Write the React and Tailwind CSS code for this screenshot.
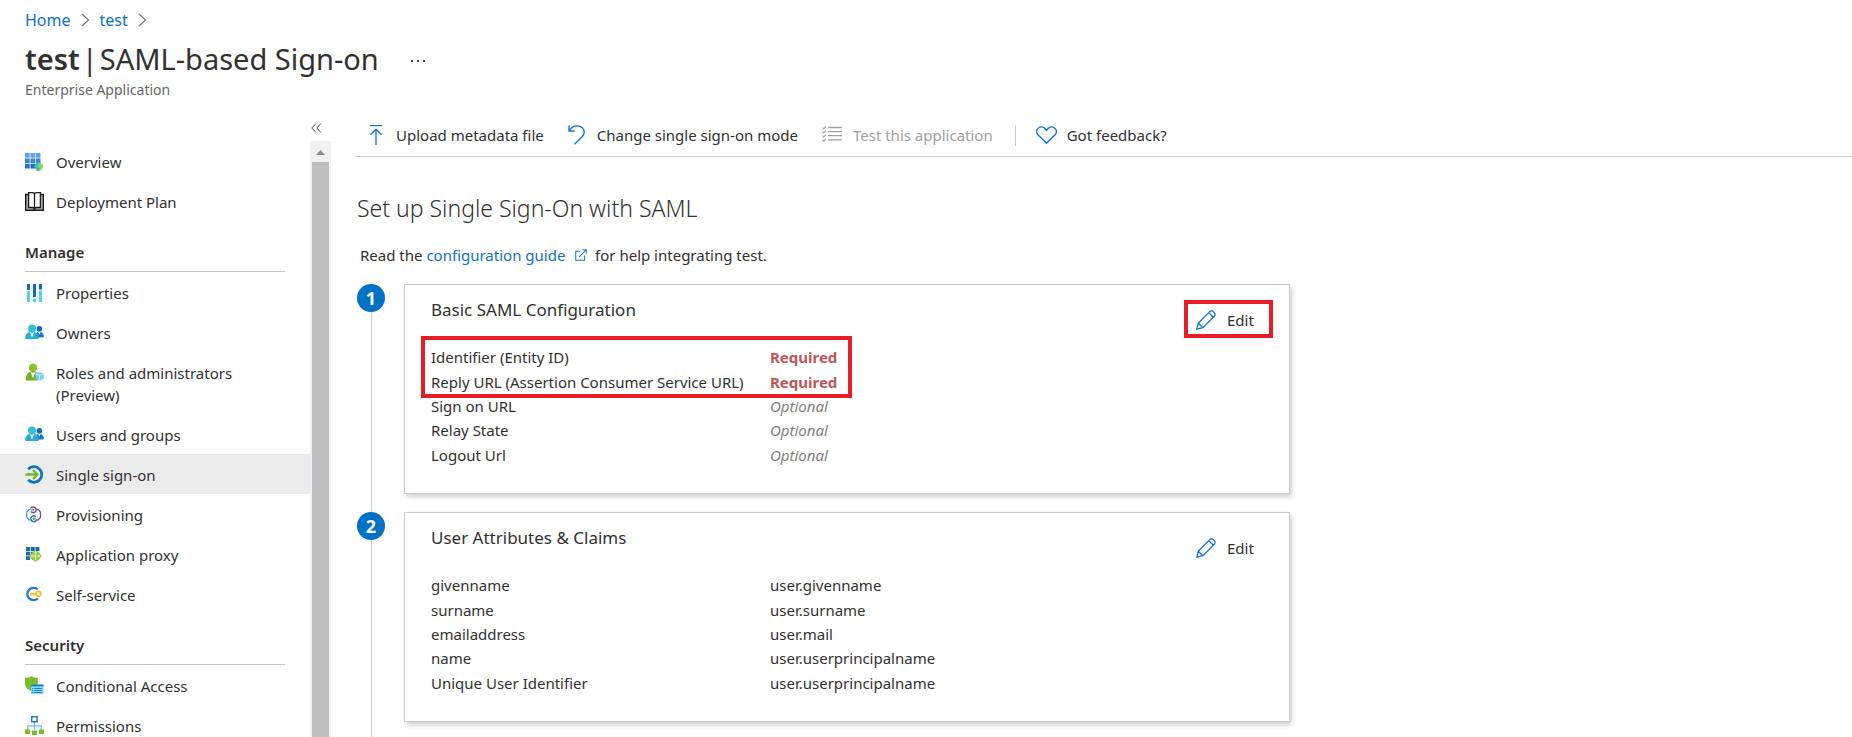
import React, { useState } from 'react';
import clsx from 'clsx';

const Icon = ({ size = 18, box = '0 0 18 18', children }) => (
  <svg width={size} height={size} viewBox={box} fill="none" aria-hidden="true" className="shrink-0">{children}</svg>
);

const OverviewIcon = () => (
  <Icon>
    {[0, 5.4, 10.8].map((y, r) => [0, 5.4, 10.8].map(x => (
      <rect key={`${x}-${y}`} x={x} y={y} width="4.7" height="4.7" fill={['#5ea0ef', '#3f86da', '#2a6fc4'][r]} />
    )))}
    <circle cx="13.8" cy="13.6" r="4.2" fill="#86e04a" />
    <path d="M13.8 9.4a4.2 4.2 0 0 0-3.6 6.3l3.400-2z" fill="#32bedd" />
    <path d="M10.400 16a4.2 4.2 0 0 0 5 1.5l-1.600-3.200z" fill="#32bedd" />
  </Icon>
);

const BookIcon = () => (
  <Icon size={19} box="0 0 19 19">
    <path d="M.7 2.500h17.600v15.800H.7z" fill="#b5b5b5" stroke="#1b1b1b" strokeWidth="1.400" />
    <path d="M3.600.7h3.900c1.200 0 2 .6 2 1.800 0-1.200.8-1.800 2-1.800h3.900V15.500h-3.900c-1 0-2 .7-2 2.500 0-1.800-1-2.500-2-2.500H3.600z" fill="#fff" stroke="#1b1b1b" strokeWidth="1.300" />
    <path d="M9.500 2v16" stroke="#1b1b1b" strokeWidth="1.300" />
  </Icon>
);

const PropertiesIcon = () => (
  <Icon>
    <path d="M3.500 0v6M9.500 0v13M15.500 0v5.500" stroke="#0f6cbd" strokeWidth="3" />
    <path d="M3.500 7v11M9.500 14.500V18M15.500 6.500V18" stroke="#50d5f5" strokeWidth="3" />
  </Icon>
);

const UsersIcon = () => (
  <Icon size={19} box="0 0 19 18">
    <circle cx="14.400" cy="5.300" r="2.800" fill="#0f6cbd" />
    <path d="M10.500 14h7.300c.8 0 1.200-.5 1.100-1.200-.4-2.800-2-4.500-4.500-4.500s-3.900 1.700-3.900 5.700z" fill="#1a78cc" />
    <path d="M14.400 11l-1.200-2.600h2.400z" fill="#fff" />
    <circle cx="7" cy="5" r="4" fill="#32bedd" />
    <path d="M1.200 15.500h11.400c.9 0 1.400-.6 1.300-1.500C13.400 10.500 11 8 7 8S.6 10.500.1 14c-.1.900.3 1.500 1.100 1.500z" fill="#27aed0" />
    <path d="M7 14L4.800 8.600Q7 10 9.200 8.600z" fill="#fff" />
  </Icon>
);

const RolesIcon = () => (
  <Icon size={19} box="0 0 19 18">
    <circle cx="8" cy="4.200" r="4.200" fill="#86c32c" />
    <path d="M2 17h10.500l2-3C14 10 12 7.800 8 7.800S1.200 10.500.6 15c-.1 1.200.4 2 1.400 2z" fill="#76ab26" />
    <path d="M8 14.500L5.500 8.400Q8 10 10.500 8.400z" fill="#fff" />
    <path d="M14.500 8.700l4.300 1.600v4.900l-4.300 2-4-2v-4.900z" fill="#6bd3ee" />
    <path d="M10.500 10.300l4 1.600 4.300-1.600M14.500 12v5" stroke="#c5effa" strokeWidth="1" />
  </Icon>
);

const SignOnIcon = () => (
  <Icon size={19} box="0 0 19 19">
    <path d="M3.200 4.300A7.800 7.800 0 1 1 3.200 14.700" stroke="#1172bd" strokeWidth="2.800" />
    <path d="M.5 9.500H12M8 5l4.500 4.500L8 14" stroke="#76b82a" strokeWidth="2.300" />
  </Icon>
);

const ProvisioningIcon = () => (
  <Icon>
    <path d="M5.500 3.500H4L1.800 6v5.500L4 14h1.500" stroke="#3c8fc4" strokeWidth="1.200" />
    <path d="M11.500 3.500H13L15.500 6v5.500L13 14h-2.500" stroke="#7b4fa3" strokeWidth="1.300" />
    <path d="M5.500 2.500C7 0 11.300 1 11.200 4 11.100 6.800 7.600 7.500 6 5.500" stroke="#68478f" strokeWidth="1.400" />
    <path d="M6 4h3M7.800 2.700L9.200 4 7.800 5.300" stroke="#777" strokeWidth="1" />
    <path d="M11.300 14.500c-1.600 2.200-5.600 1.200-5.500-2 .1-3 3.600-3.600 5.200-1.500" stroke="#1b74ba" strokeWidth="1.400" />
    <path d="M11 12.700H8M9.400 11.300L8 12.700l1.400 1.400" stroke="#60a839" strokeWidth="1.100" />
  </Icon>
);

const ProxyIcon = () => (
  <Icon>
    <path d="M1 1h4v4H1zM5.700 1h4v4h-4zM10.400 1h4v4h-4zM1 5.700h4v3.800H1zM1 10.200h4V14H1zM5.700 5.700h4v4h-4z" fill="#1269ad" />
    <path d="M10.500 4l6.500 6-6.500 6L4 10z" fill="#94c63e" />
    <circle cx="10.500" cy="10" r="5" fill="#94c63e" />
    <path d="M10.500 5.500v9M6.500 10h8M9.200 6.700l1.300-1.400 1.300 1.400M7.600 8.700L6.300 10l1.300 1.300M13.400 8.700l1.300 1.300-1.300 1.300" stroke="#e6f5bf" strokeWidth="1" />
  </Icon>
);

const SelfServiceIcon = () => (
  <Icon>
    <path d="M12.800 3.500A6.200 6.200 0 1 0 12.800 12.500" stroke="#1d7fc4" strokeWidth="2.300" />
    <circle cx="13.400" cy="7.800" r="2.300" stroke="#fbbf2d" strokeWidth="1.800" />
    <path d="M11.500 7.800H4.800M6.200 7.800v2M8.500 7.800v1.700" stroke="#fbbf2d" strokeWidth="1.600" />
  </Icon>
);

const ConditionalIcon = () => (
  <Icon size={19} box="0 0 19 19">
    <path d="M6.500 0C8.500 1.500 10.500 1.700 12.800 1.800V8c0 4-3.600 6-6.300 7.500C3.500 13.700 0 11.800 0 8V1.800C2.500 1.700 4.500 1.500 6.500 0z" fill="#7fba2c" />
    <path d="M6 8.500h12.500V18H6z" fill="#7ddcf8" />
    <path d="M6 8.500h12.500v1.800H6z" fill="#1377bf" />
    <path d="M7 12.500h1.200M7 14.500h1.200M7 16.500h1.200M9.200 12.500h8M9.200 14.500h8M9.200 16.500h8" stroke="#2a7fc2" strokeWidth="1" />
  </Icon>
);

const PermissionsIcon = () => (
  <Icon size={19} box="0 0 19 19">
    <path d="M9.500 6v8M2.800 14V9.800h13.400V14" stroke="#6cc4ea" strokeWidth="1.300" />
    <path d="M6.700.8h5.400v5H6.700z" fill="#fff" stroke="#1c7fc7" strokeWidth="1.500" />
    <path d="M0 13.500h5V18H0zM7 14.500h5V19H7zM14 13.500h5V18h-5z" fill="#7cbb2f" />
  </Icon>
);

const UploadIcon = () => (
  <Icon size={20} box="0 0 20 20">
    <path d="M4 .7h12M10 20V4.200M4.500 9.700L10 4.200l5.500 5.500" stroke="#0f78d0" strokeWidth="1.300" />
  </Icon>
);

const UndoIcon = () => (
  <Icon size={20} box="0 0 20 20">
    <path d="M3 .3v5.700h5.700M3 5.800C5 2.300 8 .8 11.200.8c4.500 0 7 3.200 7 6.500 0 2-.8 3.300-2 4.500L8.500 19.300" stroke="#0f78d0" strokeWidth="1.300" />
  </Icon>
);

const ChecklistIcon = () => (
  <Icon size={20} box="0 0 20 20">
    <path d="M6 2.500h14M6 6.600h14M6 10.700h14M6 14.800h14" stroke="#a19f9d" strokeWidth="1.300" />
    <path d="M.5 2.500l1.200 1.300L4 1.500M.5 6.600l1.200 1.300L4 5.600M.5 10.700L1.700 12 4 9.700M.5 14.800l1.200 1.300L4 13.800" stroke="#a19f9d" strokeWidth="1.100" />
  </Icon>
);

const HeartIcon = () => (
  <Icon size={21} box="0 0 21 21">
    <path d="M10.500 18.300L1.900 9.700C.2 7.800.2 5.100 1.900 3.400 3.800 1.600 6.700 1.600 8.500 3.300l2 2 2-2c1.800-1.700 4.700-1.700 6.600.1 1.700 1.700 1.700 4.400 0 6.300z" stroke="#0f78d0" strokeWidth="1.400" />
  </Icon>
);

const PencilIcon = () => (
  <Icon size={20} box="0 0 20 20">
    <path d="M.8 19.200l1.500-6L13.500 1.900c1.200-1.300 3-1.300 4 0l.6.600c1.300 1.100 1.300 2.800 0 4L6.900 17.700zM2.300 13.200l4.600 4.500M12.800 2.600l4.600 4.600" stroke="#0f78d0" strokeWidth="1.300" />
  </Icon>
);

const ExternalIcon = () => (
  <Icon size={12} box="0 0 13 13">
    <path d="M6 2.500H.8v9.700h9.700V7M8 .7h4.300V5M12.300.7L4.500 8.500" stroke="#0f78d0" strokeWidth="1.100" />
  </Icon>
);

const Chevron = () => (
  <svg width="9" height="14" viewBox="0 0 9 14" fill="none" aria-hidden="true">
    <path d="M1 1l6.500 6L1 13" stroke="#777" strokeWidth="1.200" />
  </svg>
);

const groups = [
  {
    items: [
      { label: 'Overview', icon: OverviewIcon },
      { label: 'Deployment Plan', icon: BookIcon },
    ],
  },
  {
    title: 'Manage',
    items: [
      { label: 'Properties', icon: PropertiesIcon },
      { label: 'Owners', icon: UsersIcon },
      { label: 'Roles and administrators (Preview)', icon: RolesIcon },
      { label: 'Users and groups', icon: UsersIcon },
      { label: 'Single sign-on', icon: SignOnIcon },
      { label: 'Provisioning', icon: ProvisioningIcon },
      { label: 'Application proxy', icon: ProxyIcon },
      { label: 'Self-service', icon: SelfServiceIcon },
    ],
  },
  {
    title: 'Security',
    items: [
      { label: 'Conditional Access', icon: ConditionalIcon },
      { label: 'Permissions', icon: PermissionsIcon },
    ],
  },
];

const steps = [
  {
    title: 'Basic SAML Configuration',
    highlight: true,
    rows: [
      ['Identifier (Entity ID)', 'Required'],
      ['Reply URL (Assertion Consumer Service URL)', 'Required'],
      ['Sign on URL', 'Optional'],
      ['Relay State', 'Optional'],
      ['Logout Url', 'Optional'],
    ],
  },
  {
    title: 'User Attributes & Claims',
    rows: [
      ['givenname', 'user.givenname'],
      ['surname', 'user.surname'],
      ['emailaddress', 'user.mail'],
      ['name', 'user.userprincipalname'],
      ['Unique User Identifier', 'user.userprincipalname'],
    ],
  },
];

function Sidebar() {
  const [active, setActive] = useState('Single sign-on');

  return (
    <aside className="flex w-[331px] shrink-0 flex-col">
      <div className="flex h-[27px] items-center justify-end pr-[9px]">
        <button aria-label="Collapse menu" className="p-0">
          <svg width="11" height="10" viewBox="0 0 11 10" fill="none"><path d="M5 .5L.8 5 5 9.500M10 .5L5.800 5 10 9.500" stroke="#444" /></svg>
        </button>
      </div>
      <div className="flex min-h-0 flex-1">
        <nav className="min-w-0 flex-1 overflow-hidden">
          {groups.map((g, i) => (
            <div key={i} className={clsx(g.title && 'pt-4')}>
              {g.title && (
                <h2 className="mx-[25px] flex h-[35px] items-center border-b border-[#c4c4c4] pb-[5px] text-[15px] font-semibold">{g.title}</h2>
              )}
              {g.items.map(({ label, icon: ItemIcon }) => (
                <button
                  key={label}
                  onClick={() => setActive(label)}
                  className={clsx('flex w-full items-start gap-3 pt-[10px] pb-2 pl-[25px] text-left leading-[22px]', active === label && 'bg-[#ebebeb]')}
                >
                  <span className="flex h-[21px] w-[19px] shrink-0 items-center"><ItemIcon /></span>
                  <span className="max-w-[200px]">{label}</span>
                </button>
              ))}
            </div>
          ))}
        </nav>
        <div className="flex w-[21px] flex-col items-center bg-[#f1f0f2]">
          <svg width="9" height="21" viewBox="0 0 9 21" aria-hidden="true"><path d="M0 14l4.500-5L9 14z" fill="#8f8d90" /></svg>
          <div className="w-[17px] flex-1 bg-[#c1bec2]" />
        </div>
      </div>
    </aside>
  );
}

function Toolbar() {
  return (
    <div className="flex h-[43px] items-center border-b border-[#d2d0d6] pl-[11px]">
      <button className="flex items-center gap-[10px]"><UploadIcon />Upload metadata file</button>
      <button className="ml-[22px] flex items-center gap-[11px]"><UndoIcon />Change single sign-on mode</button>
      <button disabled className="ml-6 flex items-center gap-[11px] text-[#a19f9d]"><ChecklistIcon />Test this application</button>
      <div className="mr-5 ml-[22px] h-[21px] w-px bg-[#c8c6c4]" />
      <button className="flex items-center gap-[10px]"><HeartIcon />Got feedback?</button>
    </div>
  );
}

function Step({ number, title, rows, highlight }) {
  return (
    <li className="flex gap-[19px] last:flex-1">
      <div className="flex w-7 shrink-0 flex-col items-center">
        <span className="flex h-7 w-7 shrink-0 items-center justify-center rounded-full bg-[#0072c6] text-[18px] leading-none font-bold text-white">{number}</span>
        <span className="w-px flex-1 bg-[#cfcdd3]" />
      </div>
      <div className="min-w-0 max-w-[886px] flex-1 pb-[18px]">
        <section className="relative flex h-[210px] flex-col border border-[#cbc9d0] px-[26px] pt-[12px] shadow-[2px_3px_5px_rgba(0,0,0,0.18)]">
          <h3 className="text-[17px] leading-[26px]">{title}</h3>
          <button
            className={clsx(
              'absolute top-[15px] right-4 flex h-[38px] w-[89px] items-center gap-[11px] border-4 pt-[2px] pl-2',
              highlight ? 'border-[#e81c25]' : 'border-transparent'
            )}
          >
            <PencilIcon />Edit
          </button>
          <div className="relative mt-[22px]">
            <table className="h-[122px] text-left">
              <tbody>
                {rows.map(([name, value]) => (
                  <tr key={name}>
                    <th scope="row" className="w-[339px] p-0 leading-6 font-normal">{name}</th>
                    <td
                      className={clsx(
                        'p-0 leading-6',
                        value === 'Required' && 'font-bold text-[#c25558]',
                        value === 'Optional' && 'text-[#808080] italic'
                      )}
                    >
                      {value}
                    </td>
                  </tr>
                ))}
              </tbody>
            </table>
            {highlight && <div className="pointer-events-none absolute -top-[9px] -left-[10px] h-[62px] w-[431px] border-4 border-[#e81c25]" />}
          </div>
        </section>
      </div>
    </li>
  );
}

export default function App() {
  return (
    <div className="flex h-screen flex-col overflow-hidden bg-white font-['Noto_Sans',sans-serif] text-[15px] leading-[22px] text-[#323130]">
      <header className="px-[25px] pt-2">
        <nav aria-label="Breadcrumb" className="flex h-6 items-center gap-[10px] text-[16px] text-[#0f72c4]">
          <a href="#home">Home</a>
          <Chevron />
          <a href="#test">test</a>
          <Chevron />
        </nav>
        <div className="flex h-[46px] items-center gap-8 pt-2">
          <h1 className="flex text-[29px] leading-[38px]"><b className="font-semibold">test</b><span className="px-[2px]">|</span><span>SAML-based Sign-on</span></h1>
          <button aria-label="More" className="flex gap-[4px] pt-1">
            {[0, 1, 2].map(i => <span key={i} className="h-[2px] w-[2px] bg-[#444]" />)}
          </button>
        </div>
        <p className="h-9 text-[14px] leading-6 text-[#666]">Enterprise Application</p>
      </header>

      <div className="flex min-h-0 flex-1">
        <Sidebar />
        <main className="ml-6 flex min-w-0 flex-1 flex-col">
          <Toolbar />
          <h2 className="mt-[31px] pl-[2px] text-[23px] leading-10 font-light">Set up Single Sign-On with SAML</h2>
          <p className="mt-4 pl-[5px]">
            Read the <a href="#guide" className="text-[#0f72c4]">configuration guide <span className="ml-[6px] inline-block"><ExternalIcon /></span></a>&nbsp; for help integrating test.
          </p>
          <ol className="mt-[18px] flex min-h-0 flex-1 flex-col pl-[2px]">
            {steps.map((s, i) => <Step key={s.title} number={i + 1} {...s} />)}
          </ol>
        </main>
      </div>
    </div>
  );
}
